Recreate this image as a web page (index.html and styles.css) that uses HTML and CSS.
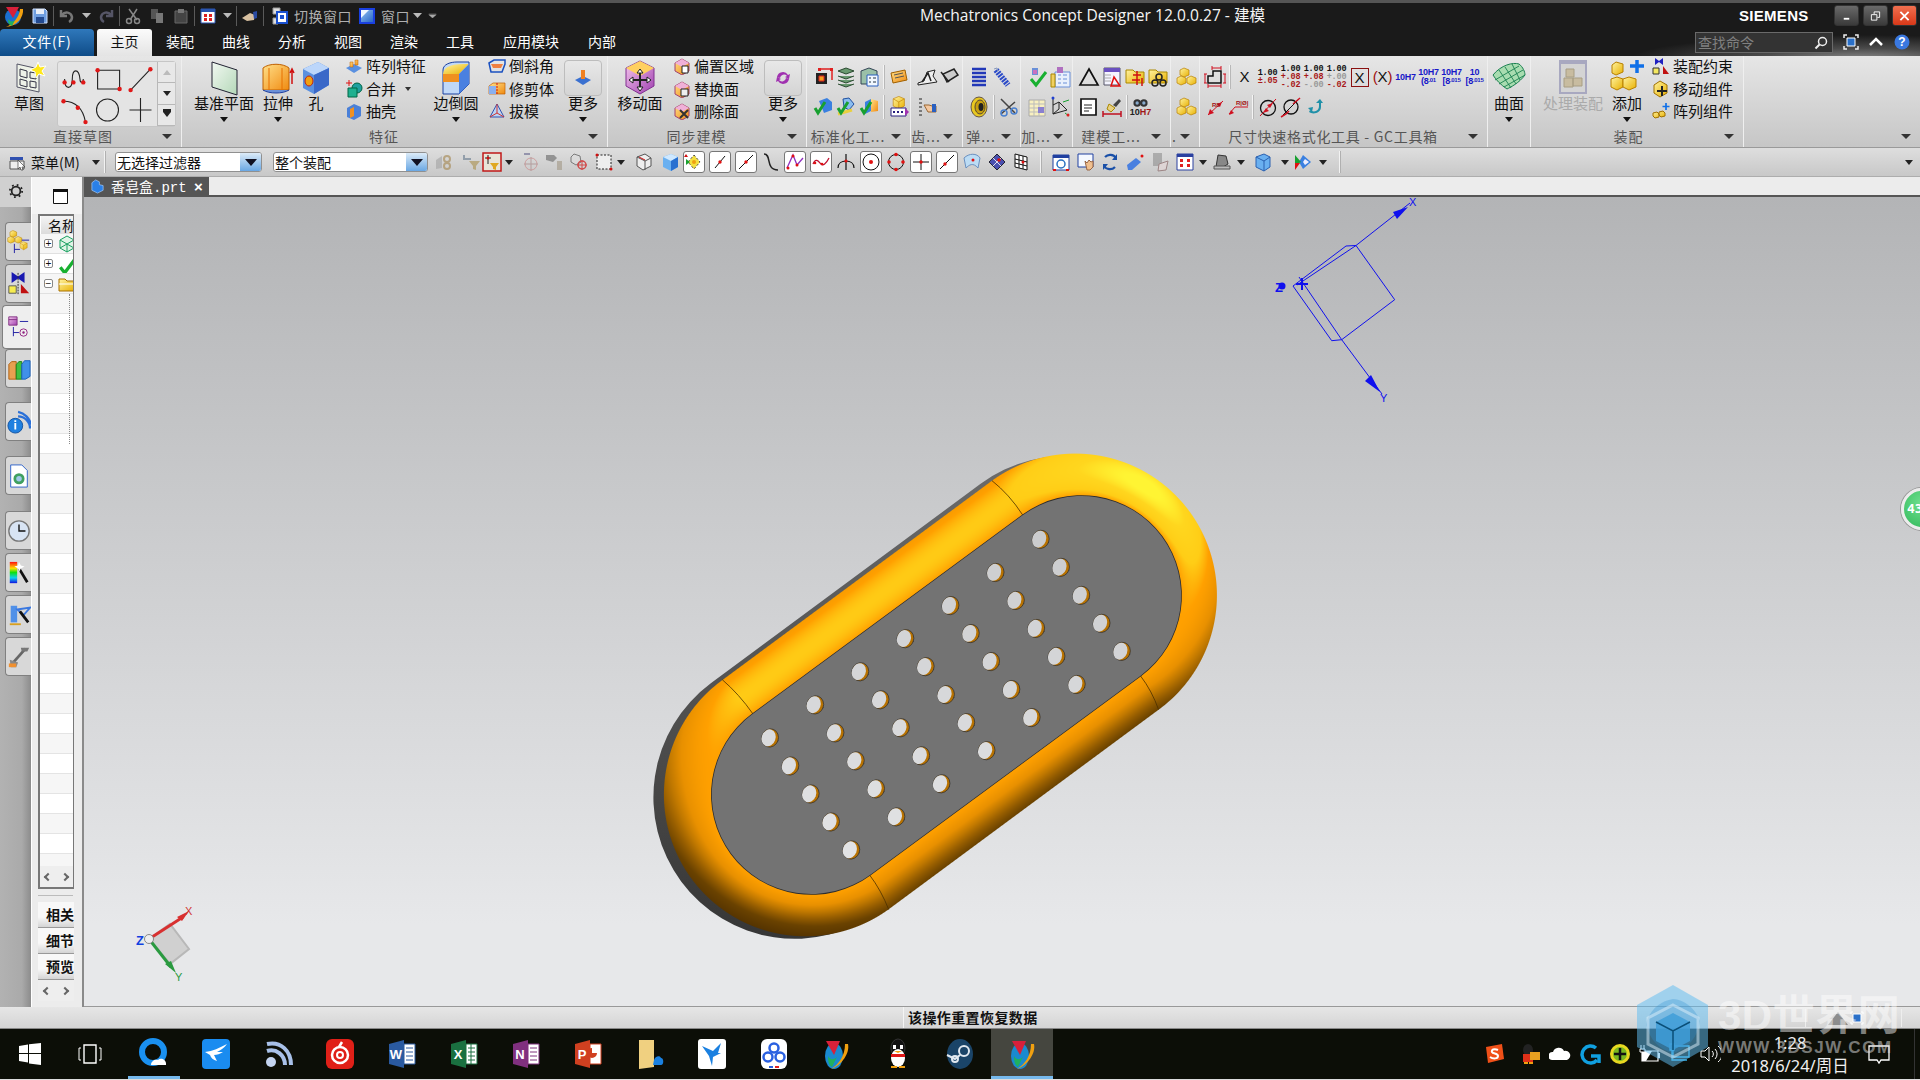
FILE: index.html
```html
<!DOCTYPE html>
<html lang="zh">
<head>
<meta charset="utf-8">
<title>Mechatronics Concept Designer</title>
<link rel="stylesheet" href="styles.css">
</head>
<body>
<svg class="defs" aria-hidden="true"><defs>
<linearGradient id="gb" x1="0" y1="0" x2="1" y2="1"><stop offset="0" stop-color="#9cc8f5"/><stop offset="1" stop-color="#1f5fc4"/></linearGradient>
<linearGradient id="go" x1="0" y1="0" x2="1" y2="1"><stop offset="0" stop-color="#ffe08a"/><stop offset="1" stop-color="#f08a10"/></linearGradient>
<linearGradient id="gy" x1="0" y1="0" x2="1" y2="1"><stop offset="0" stop-color="#fff3a0"/><stop offset="1" stop-color="#e8b000"/></linearGradient>
<linearGradient id="gg" x1="0" y1="0" x2="1" y2="1"><stop offset="0" stop-color="#f2f8f2"/><stop offset="1" stop-color="#b4d8b8"/></linearGradient>
<linearGradient id="gp" x1="0" y1="0" x2="1" y2="1"><stop offset="0" stop-color="#f6c8ee"/><stop offset="1" stop-color="#a040b0"/></linearGradient>
<linearGradient id="rb" x1="0" y1="0" x2="0" y2="1"><stop offset="0" stop-color="#ff1010"/><stop offset=".3" stop-color="#ffe000"/><stop offset=".5" stop-color="#10e010"/><stop offset=".75" stop-color="#10d0f0"/><stop offset="1" stop-color="#1010e0"/></linearGradient>
<g id="cube"><path d="M11 3l7 3v9l-7 4-7-4V6z" fill="url(#gy)" stroke="#c08000" stroke-width=".8"/><path d="M4 6l7 4 7-4M11 10v9" fill="none" stroke="#c08000" stroke-width=".8"/></g>
<g id="cubes"><path d="M8 2l5 2v5l-5 2-4-2V4z" fill="url(#gy)" stroke="#b88000" stroke-width=".7"/><path d="M5 10l5 2v5l-5 2-4-2v-5z" fill="url(#gy)" stroke="#b88000" stroke-width=".7"/><path d="M15 10l5 2v5l-5 2-4-2v-5z" fill="url(#gy)" stroke="#b88000" stroke-width=".7"/></g>
<g id="check"><path d="M3 13l4 5 9-12" fill="none" stroke="#18b030" stroke-width="3"/></g>
<g id="arrowdn"><path d="M0 0h9L4.500 5z"/></g>
</defs></svg>

<header class="top">
  <div class="qat">
    <div class="qat-l">
      <svg class="q nx" viewBox="0 0 26 26"><circle cx="13" cy="14" r="8" fill="#1a6fd0"/><path d="M6 4l13 0-6 11z" fill="#d8203a"/><path d="M23 6c1 8-6 17-17 18 7-3 13-9 14-18z" fill="#f0a010"/><path d="M8 16c2 3 5 3 7 1l-3 6c-3-1-4-3-4-7z" fill="#20b060"/></svg>
      <svg class="q" viewBox="0 0 18 18"><path d="M2 2h12l2 2v12H2z" fill="#6f9ee0" stroke="#cfe0ff"/><path d="M5 2h8v5H5z" fill="#e8eef8"/><path d="M5 10h8v6H5z" fill="#234a90"/></svg>
      <i class="qsep"></i>
      <svg class="q" viewBox="0 0 18 18"><path d="M3 3v6h6M4 8c3-4 9-3 10 2 0 2-1 4-3 5" fill="none" stroke="#777" stroke-width="2.500"/></svg>
      <svg class="qa" viewBox="0 0 9 5"><use href="#arrowdn"/></svg>
      <svg class="q" viewBox="0 0 18 18"><path d="M15 3v6H9M14 8c-3-4-9-3-10 2 0 2 1 4 3 5" fill="none" stroke="#556" stroke-width="2.500"/></svg>
      <i class="qsep"></i>
      <svg class="q" viewBox="0 0 18 18"><path d="M13 2L6 13M5 2l8 11" stroke="#888" stroke-width="1.500"/><circle cx="5" cy="14" r="2.500" fill="none" stroke="#888" stroke-width="1.500"/><circle cx="13" cy="14" r="2.500" fill="none" stroke="#888" stroke-width="1.500"/></svg>
      <svg class="q" viewBox="0 0 18 18"><path d="M3 2h7v10H3z" fill="#555"/><path d="M8 6h7v10H8z" fill="#777"/></svg>
      <svg class="q" viewBox="0 0 18 18"><path d="M3 4h12v12H3z" fill="#444" stroke="#666"/><path d="M6 2h6v4H6z" fill="#777"/></svg>
      <i class="qsep"></i>
      <svg class="q" viewBox="0 0 18 18"><path d="M2 2h14v14H2z" fill="#fff" stroke="#2a55b0"/><path d="M2 2h14v3H2z" fill="#2a55b0"/><path d="M5 7h3v3H5zM10 7h3v3h-3zM5 11h3v3H5zM10 11h3v3h-3z" fill="#e02020"/></svg>
      <svg class="qa" viewBox="0 0 9 5"><use href="#arrowdn"/></svg>
      <i class="qsep"></i>
      <svg class="q" viewBox="0 0 18 18"><path d="M1 11l8-5 5 2-1 5-7 1z" fill="#d8c0a0"/><path d="M12 5l4-1v7l-3 1z" fill="#2a4aa0"/></svg>
      <i class="qsep"></i>
      <svg class="q sw" viewBox="0 0 18 18"><path d="M2 1h7v6H2zM2 11h5v6H2z" fill="#ddd" stroke="#999"/><path d="M6 5h10v11H6z" fill="#fff" stroke="#1a50d0" stroke-width="2"/><path d="M9 8h4v4H9z" fill="#1a50d0"/></svg>
      <span class="qlabel">切换窗口</span>
      <svg class="q qw" viewBox="0 0 18 18"><path d="M2 2h14v14H2z" fill="url(#gb)" stroke="#1a40e0" stroke-width="2"/><path d="M3 3h8l-8 8z" fill="#eef6ff"/></svg>
      <span class="qlabel">窗口</span>
      <svg class="qa" viewBox="0 0 9 5"><use href="#arrowdn"/></svg>
      <svg class="qa" viewBox="0 0 9 6"><path d="M0 0h9M0 2h9L4.500 6z" fill="#aaa" stroke="#aaa" stroke-width=".5"/></svg>
    </div>
    <div class="title">Mechatronics Concept Designer 12.0.0.27 - 建模</div>
    <div class="siemens">SIEMENS</div>
    <div class="win"><button class="wb">
      <svg viewBox="0 0 12 12"><path d="M3 8h6v2H3z" fill="#fff"/></svg></button><button class="wb">
      <svg viewBox="0 0 12 12"><path d="M1.500 4.500h6v6h-6zM4.500 4V1.500h6v6H8" fill="none" stroke="#fff"/></svg></button><button class="wb close">
      <svg viewBox="0 0 12 12"><path d="M1.500 1.500l9 9M10.500 1.500l-9 9" stroke="#fff" stroke-width="2"/></svg></button></div>
  </div>
  <nav class="tabs">
    <div class="tab file">文件(F)</div>
    <div class="tab on">主页</div>
    <div class="tab">装配</div><div class="tab">曲线</div><div class="tab">分析</div><div class="tab">视图</div>
    <div class="tab">渲染</div><div class="tab">工具</div><div class="tab wide">应用模块</div><div class="tab">内部</div>
    <div class="search"><span>查找命令</span><svg viewBox="0 0 14 14"><circle cx="8.500" cy="5.500" r="4" fill="none" stroke="#eee" stroke-width="1.500"/><path d="M5.500 8.500L1.500 12.500" stroke="#eee" stroke-width="2"/></svg></div>
    <div class="helpers">
      <svg viewBox="0 0 16 16"><path d="M1 4V1h3M12 1h3v3M15 12v3h-3M4 15H1v-3" fill="none" stroke="#eee" stroke-width="1.500"/><path d="M4 4h8v8H4z" fill="#2a70c8" stroke="#fff"/></svg>
      <svg viewBox="0 0 16 16"><path d="M2 11l6-6 6 6" fill="none" stroke="#fff" stroke-width="2.500"/></svg>
      <svg viewBox="0 0 16 16"><circle cx="8" cy="8" r="7.500" fill="#3a78e0"/><text x="8" y="12" class="qm">?</text></svg>
    </div>
  </nav>
</header>

<section class="ribbon">
  <div class="grp w182">
    <div class="body">
      <div class="big ml15 w28"><svg class="bi" viewBox="0 0 36 36"><path d="M6 4l22 5v23L6 27z" fill="#eef2e8" stroke="#556" /><path d="M9 9l7 2v7l-7-2zM19 12l6 1v6l-6-1zM9 19l7 2v6l-7-2zM19 21l6 1v6l-6-1z" fill="none" stroke="#334" /><path d="M27 2l2 5 6-1-4 5 3 5-6-2-3 4-1-6-5-2 6-3z" fill="#ffe81a" stroke="#fff"/></svg><span class="lb">草图</span></div>
      <div class="gallery">
        <div class="gal-g">
          <svg viewBox="0 0 30 28"><path d="M6 15c0 10 7 10 7 0 0-10 6-10 7 0 0 4 3 4 3 0" fill="none" stroke="#222"/><circle cx="6" cy="18" r="2" fill="#e01818"/><circle cx="14" cy="18" r="2" fill="#e01818"/><circle cx="23" cy="18" r="2" fill="#e01818"/></svg>
          <svg viewBox="0 0 30 28"><path d="M6 7h20v17H6z" fill="none" stroke="#222"/><circle cx="6" cy="7" r="2" fill="#e01818"/><circle cx="26" cy="24" r="2" fill="#e01818"/></svg>
          <svg viewBox="0 0 30 28"><path d="M6 25L24 6" stroke="#222"/><circle cx="6" cy="25" r="2" fill="#e01818"/><circle cx="24" cy="6" r="2" fill="#e01818"/></svg>
          <svg viewBox="0 0 30 28"><path d="M5 6c12 0 18 8 20 19" fill="none" stroke="#222"/><circle cx="5" cy="6" r="2" fill="#e01818"/><circle cx="18" cy="12" r="2" fill="#e01818"/><circle cx="25" cy="25" r="2" fill="#e01818"/></svg>
          <svg viewBox="0 0 30 28"><circle cx="15" cy="14" r="10" fill="none" stroke="#222"/></svg>
          <svg viewBox="0 0 30 28"><path d="M15 3v22M5 14h20" stroke="#222"/></svg>
        </div>
        <div class="gal-s"><span class="up"></span><span class="dn"></span><span class="dn2"></span></div>
      </div>
    </div>
    <div class="foot"><span class="fl pl6">直接草图</span><i class="fa"></i></div>
  </div>

  <div class="grp w426">
    <div class="body">
      <div class="big ml13 w58"><svg class="bi" viewBox="0 0 36 36"><path d="M6 2l25 8v25L6 27z" fill="url(#gg)" stroke="#223"/></svg><span class="lb">基准平面</span><i class="ba"></i></div>
      <div class="big ml11 w28"><svg class="bi" viewBox="0 0 36 36"><path d="M3 8c6-5 20-5 26 0v22H3z" fill="url(#go)" stroke="#c06000"/><path d="M3 30c6 4 20 4 26 0" fill="#6a90d8" stroke="#2040a0"/><path d="M9 8v22M22 8v22" stroke="#e87000"/><path d="M32 24V10M30 13l2-4 2 4" fill="none" stroke="#d01010" stroke-width="1.500"/></svg><span class="lb">拉伸</span><i class="ba"></i></div>
      <div class="big ml10 w28"><svg class="bi" viewBox="0 0 36 36"><path d="M5 9l15-7 11 6v17L16 34 5 28z" fill="#5a90e0"/><path d="M5 9l15-7 11 6-15 7z" fill="#bcd6fa"/><path d="M16 15l15-7v17L16 34z" fill="#3a68c8"/><ellipse cx="11" cy="21" rx="4" ry="5" fill="#f0a010" stroke="#c02010"/></svg><span class="lb">孔</span></div>
      <div class="list ml15 lw80">
        <div class="li"><svg viewBox="0 0 18 18"><path d="M1 11l8-4 8 4-8 5z" fill="#5a90e0"/><path d="M5 5h3v5H5zM10 3h3v5h-3z" fill="url(#go)" stroke="#c06000" stroke-width=".5"/></svg>阵列特征</div>
        <div class="li"><svg viewBox="0 0 18 18"><circle cx="12" cy="8" r="5" fill="#20a0a0" stroke="#064"/><path d="M3 8h9v9H3z" fill="#20b090" stroke="#064"/><path d="M1 3h6M4 0v6" stroke="#e01010"/></svg>合并<i class="mini"></i></div>
        <div class="li"><svg viewBox="0 0 18 18"><path d="M2 6l7-4 7 3v9l-7 4-7-3z" fill="#4a80d8"/><path d="M5 7l4-2v9l-4 2z" fill="#f09020"/></svg>抽壳</div>
      </div>
      <div class="big ml9 w44"><svg class="bi" viewBox="0 0 36 36"><path d="M5 10c0-6 8-8 14-8h12v22l-10 10H5z" fill="#c0d8f8" stroke="#1a40a0"/><path d="M5 14C6 5 15 4 31 4L21 14z" fill="url(#gy)"/><path d="M5 14h16v8H5z" fill="#f09020"/><path d="M21 14l10-10v20l-10 10z" fill="#4a80e0"/></svg><span class="lb">边倒圆</span><i class="ba"></i></div>
      <div class="list ml10 lw65">
        <div class="li"><svg viewBox="0 0 18 18"><path d="M1 6l5-3h11v4l-3 8H3z" fill="none" stroke="#1a50c0" stroke-width="1.500"/><path d="M3 7l12 0-2 4H5z" fill="#f08040"/></svg>倒斜角</div>
        <div class="li"><svg viewBox="0 0 18 18"><path d="M1 6l4-3h12v11H1z" fill="url(#go)" stroke="#c06000" stroke-width=".7"/><path d="M1 6h7v8H1z" fill="#8ab0f0"/><path d="M9 3v12" stroke="#d01010" stroke-dasharray="2 1"/></svg>修剪体</div>
        <div class="li"><svg viewBox="0 0 18 18"><path d="M9 2l7 13H2z" fill="#bcd4f4" stroke="#3050b0"/><path d="M2 15l7-4 7 4M9 2v9" fill="none" stroke="#d03030"/></svg>拔模</div>
      </div>
      <div class="big ml11 w38"><div class="more"><svg viewBox="0 0 22 22"><path d="M3 13l8-4 8 4-8 5z" fill="#3a70d0"/><path d="M9 3h4v9H9z" fill="#f08020"/></svg></div><span class="lb">更多</span><i class="ba"></i></div>
    </div>
    <div class="foot"><span class="fl">特征</span><i class="fa"></i></div>
  </div>

  <div class="grp w199">
    <div class="body">
      <div class="big ml10 w44"><svg class="bi" viewBox="0 0 36 36"><path d="M18 1l14 7v18l-14 8-14-8V8z" fill="url(#gp)" stroke="#803090"/><path d="M4 8l14 8 14-8-14-7z" fill="#ffd060"/><path d="M18 11v18M9 20h18" stroke="#222" stroke-width="2"/><path d="M18 9l-3 4h6zM18 31l-3-4h6zM7 20l4-3v6zM29 20l-4-3v6z" fill="#fff" stroke="#222"/></svg><span class="lb">移动面</span></div>
      <div class="list ml11 lw79">
        <div class="li"><svg viewBox="0 0 18 18"><path d="M2 6l7-4 7 4v8l-7 4-7-4z" fill="url(#go)" stroke="#a04070"/><path d="M2 6l7-4 7 4-7 4z" fill="#f0b0d8"/><path d="M9 9h6v7H9z" fill="#fff" stroke="#222"/></svg>偏置区域</div>
        <div class="li"><svg viewBox="0 0 18 18"><path d="M2 6l7-4 7 4v8l-7 4-7-4z" fill="url(#go)" stroke="#a04070"/><path d="M2 6l7-4 7 4-7 4z" fill="#f0b0d8"/><path d="M8 9h7v7H8z" fill="#eee" stroke="#222"/></svg>替换面</div>
        <div class="li"><svg viewBox="0 0 18 18"><path d="M2 6l7-4 7 4v8l-7 4-7-4z" fill="url(#go)" stroke="#a04070"/><path d="M2 6l7-4 7 4-7 4z" fill="#f0b0d8"/><path d="M7 8l8 8M15 8l-8 8" stroke="#333" stroke-width="2"/></svg>删除面</div>
      </div>
      <div class="big ml12 w38"><div class="more"><svg viewBox="0 0 22 22"><path d="M5 10a6 6 0 0 1 11-2l2-1-1 5-4-2 2-1a4 4 0 0 0-7 2zM17 12a6 6 0 0 1-11 2l-2 1 1-5 4 2-2 1a4 4 0 0 0 7-2z" fill="#a030b0"/></svg></div><span class="lb">更多</span><i class="ba"></i></div>
    </div>
    <div class="foot"><span class="fl">同步建模</span><i class="fa"></i></div>
  </div>

  <div class="grp w104">
    <div class="rows">
      <div class="row">
        <span class="sl"><svg viewBox="0 0 22 22"><path d="M4 7h11v11H4z" fill="#222"/><path d="M7 10h5v5H7z" fill="#f0a020" stroke="#e02020"/><path d="M7 3h13v11" fill="none" stroke="#e02020" stroke-width="1.500"/><path d="M6 2h3v3H6zM18 2h3v3h-3z" fill="#e02020"/></svg></span>
        <span class="sl"><svg viewBox="0 0 22 22"><path d="M3 5l8-3 8 3-8 3zM3 10l8 3 8-3M3 14l8 3 8-3M3 18l8 3 8-3" fill="#6a9a70" stroke="#2a4a30"/></svg></span>
        <span class="sl"><svg viewBox="0 0 22 22"><path d="M3 5l8-3 8 3v13H3z" fill="#9ac0a8" stroke="#345"/><path d="M9 9h11v11H9z" fill="#f2f8ff" stroke="#2a60c0"/><path d="M11 12h2M15 12h3M11 16h2M15 16h3" stroke="#234"/></svg></span>
        <i class="vsep"></i>
        <span class="sl"><svg viewBox="0 0 22 22"><path d="M3 7l14-3 2 10L5 17z" fill="url(#go)" stroke="#a06000"/><path d="M6 9l9-2M7 12l9-2" stroke="#555"/></svg></span>
      </div>
      <div class="row">
        <span class="sl"><svg viewBox="0 0 22 22"><path d="M7 5l8-3 5 4v8l-8 3z" fill="#3a80e0"/><path d="M3 12l3 5 7-11" fill="none" stroke="#18a030" stroke-width="3"/></svg></span>
        <span class="sl"><svg viewBox="0 0 22 22"><path d="M8 3l6-1 5 6-5 6-5-3z" fill="#8abcf0" stroke="#2050a0"/><path d="M3 18l14-4" stroke="#e8d040" stroke-width="3"/><path d="M3 12l3 5 7-11" fill="none" stroke="#18a030" stroke-width="3"/></svg></span>
        <span class="sl"><svg viewBox="0 0 22 22"><path d="M7 6l6-3v12l-6 3z" fill="#3a80e0"/><path d="M13 3l7 2v10l-7 1z" fill="url(#go)"/><path d="M3 12l3 5 7-11" fill="none" stroke="#18a030" stroke-width="3"/></svg></span>
        <i class="vsep"></i>
        <span class="sl"><svg viewBox="0 0 22 22"><use href="#cube" transform="translate(2,-2) scale(.8)"/><path d="M3 12h15v8H3z" fill="#fff" stroke="#2a2080"/><path d="M5 16h2M9 16h2M13 16h2" stroke="#2a2080" stroke-width="2"/><path d="M17 12l4 4-4 4z" fill="#a030b0"/></svg></span>
      </div>
    </div>
    <div class="foot"><span class="fl">标准化工...</span><i class="fa"></i></div>
  </div>

  <div class="grp w52">
    <div class="rows">
      <div class="row">
        <span class="sl"><svg viewBox="0 0 22 22"><path d="M2 17l6-2 3-9 8-2-2 6 4 6-19 3z" fill="#eee" stroke="#222"/><path d="M6 16l6-9 3 8" fill="none" stroke="#222" stroke-width="1.500"/></svg></span>
        <span class="sl"><svg viewBox="0 0 22 22"><path d="M4 8l4 8 11-7-4-6z" fill="#ccc" stroke="#222" stroke-width="1.500"/><path d="M2 6l8 10" stroke="#222" stroke-width="1.500"/></svg></span>
      </div>
      <div class="row">
        <span class="sl"><svg viewBox="0 0 22 22"><path d="M3 3h3M3 7h3M3 11h3M3 15h3M3 19h3" stroke="#222"/><path d="M8 9h5l3 1h4v6h-8z" fill="#f4c8a0" stroke="#963"/><path d="M16 8h4v8h-4z" fill="#2a60c0"/></svg></span>
      </div>
    </div>
    <div class="foot"><span class="fl">齿...</span><i class="fa"></i></div>
  </div>

  <div class="grp w58">
    <div class="rows">
      <div class="row">
        <span class="sl"><svg viewBox="0 0 22 22"><path d="M4 3h14M4 7h14M4 11h14M4 15h14M4 19h14" stroke="#2238b8" stroke-width="2.500"/></svg></span>
        <span class="sl"><svg viewBox="0 0 22 22"><path d="M5 4l12 15" stroke="#2a4ac8" stroke-width="6" stroke-dasharray="2 1"/><path d="M3 3l3-1 1 3" fill="none" stroke="#89b"/></svg></span>
      </div>
      <div class="row">
        <span class="sl"><svg viewBox="0 0 22 22"><ellipse cx="11" cy="11" rx="8" ry="10" fill="#e8c820" stroke="#654"/><ellipse cx="12" cy="11" rx="5" ry="7" fill="#c8a010" stroke="#543"/><ellipse cx="13" cy="11" rx="2.500" ry="4" fill="#222"/></svg></span>
        <i class="vsep nm"></i>
        <span class="sl"><svg viewBox="0 0 22 22"><path d="M4 3l14 14M18 6L4 18" stroke="#444" stroke-width="1.500"/><circle cx="7" cy="17" r="3" fill="none" stroke="#4a80d0" stroke-width="1.500"/><circle cx="17" cy="15" r="3" fill="none" stroke="#4a80d0" stroke-width="1.500"/></svg></span>
      </div>
    </div>
    <div class="foot"><span class="fl">弹...</span><i class="fa"></i></div>
  </div>

  <div class="grp w52">
    <div class="rows">
      <div class="row">
        <span class="sl"><svg viewBox="0 0 22 22"><path d="M6 2h6v7H6z" fill="#6a90d8"/><path d="M7 4h4v4H7z" fill="#c870c0"/><path d="M5 13l5 6 10-13" fill="none" stroke="#18b030" stroke-width="3"/></svg></span>
        <span class="sl"><svg viewBox="0 0 22 22"><path d="M6 6h15v15H6z" fill="#e8f0fc" stroke="#6a90d8"/><path d="M9 9h3M14 9h4M9 13h3M14 13h4M9 17h3M14 17h4" stroke="#6a90d8"/><path d="M8 1h6v6H8z" fill="#b070c0"/><path d="M2 8h4v13H2z" fill="#f0d060" stroke="#a80"/></svg></span>
      </div>
      <div class="row">
        <span class="sl"><svg viewBox="0 0 22 22"><path d="M3 4h16v16H3z" fill="#f8f0c0" stroke="#aaa"/><path d="M3 8h16M3 12h16M3 16h16M8 4v16M13 4v16" stroke="#bbb"/><path d="M12 11h6v6h-6z" fill="#8a80d0"/></svg></span>
        <span class="sl"><svg viewBox="0 0 22 22"><path d="M4 2v16l14-4M4 9l6-3 8 8M4 18l6-5V6" fill="none" stroke="#222"/><path d="M14 6l6-2M16 17l4 3" stroke="#18a030"/><circle cx="19" cy="19" r="1.500" fill="#e02020"/><circle cx="4" cy="2" r="1.500" fill="#2040d0"/></svg></span>
      </div>
    </div>
    <div class="foot"><span class="fl">加...</span><i class="fa"></i></div>
  </div>

  <div class="grp w98">
    <div class="rows">
      <div class="row">
        <span class="sl"><svg viewBox="0 0 22 22"><path d="M11 3l9 16H2z" fill="none" stroke="#111" stroke-width="1.700"/></svg></span>
        <span class="sl"><svg viewBox="0 0 22 22"><path d="M3 2h16v17H3z" fill="#f4f4ff" stroke="#556"/><path d="M3 2h16v4H3z" fill="#6a50c0"/><path d="M4 9h6M4 12h6M4 15h6" stroke="#aaa"/><path d="M13 11l6 9h-9z" fill="none" stroke="#e01010" stroke-width="1.500"/></svg></span>
        <span class="sl"><svg viewBox="0 0 22 22"><path d="M2 4h7l2 2h9v11H2z" fill="url(#gy)" stroke="#a80"/><path d="M13 5v9M9 9h8M8 14h8M13 11v8M18 12v8" stroke="#d01010" stroke-width="1.500"/></svg></span>
        <span class="sl"><svg viewBox="0 0 22 22"><path d="M2 4h7l2 2h9v11H2z" fill="url(#gy)" stroke="#a80"/><circle cx="12" cy="11" r="3" fill="none" stroke="#222" stroke-width="1.500"/><circle cx="8" cy="17" r="3" fill="none" stroke="#222" stroke-width="1.500"/><circle cx="16" cy="17" r="3" fill="none" stroke="#222" stroke-width="1.500"/></svg></span>
      </div>
      <div class="row">
        <span class="sl"><svg viewBox="0 0 22 22"><path d="M3 3h15v16H3z" fill="#fff" stroke="#111" stroke-width="1.700"/><path d="M6 9h8M6 12h8M6 15h5" stroke="#222"/></svg></span>
        <span class="sl"><svg viewBox="0 0 22 22"><path d="M12 9l6-6 2 2-5 6z" fill="#444"/><path d="M8 8l6 4-4 4-4-3z" fill="#e8d080" stroke="#a80"/><path d="M2 15v6M20 15v6M2 18h18" stroke="#c01020" stroke-width="1.500"/></svg></span>
        <i class="vsep nm"></i>
        <span class="sl dbl"><svg viewBox="0 0 22 12"><circle cx="7" cy="6" r="4.500" fill="#333"/><circle cx="15" cy="6" r="4.500" fill="#333"/><circle cx="7" cy="6" r="2" fill="#8ac"/><circle cx="15" cy="6" r="2" fill="#8ac"/></svg><b>10<em>H7</em></b></span>
      </div>
    </div>
    <div class="foot"><span class="fl">建模工...</span><i class="fa"></i></div>
  </div>

  <div class="grp w29">
    <div class="rows">
      <div class="row"><span class="sl"><svg viewBox="0 0 22 22"><use href="#cubes"/></svg></span></div>
      <div class="row"><span class="sl"><svg viewBox="0 0 22 22"><use href="#cubes"/></svg></span></div>
    </div>
    <div class="foot"><span class="fl">.</span><i class="fa"></i></div>
  </div>

  <div class="grp w288">
    <div class="rows pl3">
      <div class="row">
        <span class="sl"><svg viewBox="0 0 22 22"><path d="M4 17V10h5V5h8v12z" fill="none" stroke="#111" stroke-width="1.500"/><path d="M1 8v9M0 8h3M0 17h3M21 8v9M19 8h4M19 17h4M8 2h9M8 0v4M17 0v4M4 20h13M4 18v4M17 18v4" stroke="#d01020"/></svg></span>
        <i class="vsep"></i>
        <span class="sl dt"><b class="x">X</b></span>
        <span class="sl dt"><b>1.00</b><b class="red">±.05</b></span>
        <span class="sl dt"><b>1.00</b><b class="red">+.08</b><b class="red">-.02</b></span>
        <span class="sl dt"><b>1.00</b><b class="red">+.08</b><b class="gry">-.00</b></span>
        <span class="sl dt"><b>1.00</b><b class="gry">+.00</b><b class="red">-.02</b></span>
        <span class="sl dt"><b class="xbox">X</b></span>
        <span class="sl dt"><b class="xpar"><em>(</em>X<em>)</em></b></span>
        <span class="sl dt blu"><b>10H7</b></span>
        <span class="sl dt blu"><b>10H7</b><b class="lim">(8<sup>.01</sup></b></span>
        <span class="sl dt blu"><b>10H7</b><b class="lim">[8<sup>.015</sup></b></span>
        <span class="sl dt blu"><b>10</b><b class="lim">[8<sup>.015</sup></b></span>
      </div>
      <div class="row">
        <span class="sl"><svg viewBox="0 0 22 22"><path d="M4 19L19 5" stroke="#d01020"/><path d="M4 19l2-6 4 4zM18 6l-2 5-3-3z" fill="#d01020"/><text x="8" y="11" class="tiny">R8</text></svg></span>
        <span class="sl"><svg viewBox="0 0 22 22"><path d="M2 18l6-7h13" fill="none" stroke="#d01020"/><path d="M2 19l2-5 3 3z" fill="#d01020"/><text x="9" y="9" class="tiny">R|Ø|</text></svg></span>
        <i class="vsep"></i>
        <span class="sl"><svg viewBox="0 0 22 22"><circle cx="11" cy="12" r="7.500" fill="none" stroke="#111" stroke-width="1.300"/><path d="M3 20L19 3" stroke="#d01020"/><path d="M6 17l3-5 3 3zM16 7l-3 5-3-3z" fill="#d01020"/></svg></span>
        <span class="sl"><svg viewBox="0 0 22 22"><circle cx="11" cy="11" r="7" fill="none" stroke="#111" stroke-width="1.300"/><path d="M3 19L19 3" stroke="#111" /><path d="M1 21l5-3 3-3" stroke="#d01020" stroke-width="1.500"/><path d="M13 8l7-6" stroke="#d01020" stroke-width="1.500"/></svg></span>
        <span class="sl"><svg viewBox="0 0 22 22"><path d="M7 14c4 3 9 1 9-4V7h-3l4-4 3 4h-2v4c0 6-8 8-12 5z" fill="#2090a8"/><path d="M5 12l5-1-1 5z" fill="#2090a8"/></svg></span>
      </div>
    </div>
    <div class="foot"><span class="fl lng">尺寸快速格式化工具 - GC工具箱</span><i class="fa"></i></div>
  </div>

  <div class="grp w43">
    <div class="body">
      <div class="big w42"><svg class="bi" viewBox="0 0 36 36"><path d="M2 15C10 5 22 2 28 4c4 3 6 8 6 11-6 8-14 12-18 14C10 25 5 20 2 15z" fill="#a8dcb0" stroke="#1a8050"/><path d="M8 10l12 18M14 7l11 17M21 4l8 16M4 20L28 6M8 24L32 10M13 27L34 15" stroke="#1a8050" stroke-width=".9"/></svg><span class="lb">曲面</span><i class="ba"></i></div>
    </div>
    <div class="foot"></div>
  </div>

  <div class="grp w213">
    <div class="body">
      <div class="big ml12 w60 off"><div class="hd"><svg viewBox="0 0 28 34"><path d="M0 0h28v34H0z" fill="#a8a8c0"/><path d="M2 4h24v28H2z" fill="#d4d4d4"/><path d="M7 9h8v8H7zM14 18h9v8h-9zM5 18h9v9H5z" fill="#c8bca0" stroke="#a89e84"/></svg></div><span class="lb">处理装配</span></div>
      <div class="big ml6 w36"><svg class="bi wd" viewBox="0 0 36 36"><path d="M7 2l7 2v8l-7 3-4-2V5z" fill="url(#gy)" stroke="#b88000"/><path d="M8 17l6 2v8l-6 3-6-3v-8z" fill="url(#gy)" stroke="#b88000"/><path d="M20 17l7 2v8l-7 3-6-3v-8z" fill="url(#gy)" stroke="#b88000"/><path d="M28 0v13M21 6h14" stroke="#1070e8" stroke-width="3.500"/></svg><span class="lb">添加</span><i class="ba"></i></div>
      <div class="list ml7 asm">
        <div class="li"><svg viewBox="0 0 18 18"><path d="M3 1l4 3 4-3v7l-4-3-4 3z" fill="#2020c0"/><path d="M1 11h6v6H1z" fill="#f4e860" stroke="#333"/><path d="M11 9l6 8h-6z" fill="#c01010"/></svg>装配约束</div>
        <div class="li"><svg viewBox="0 0 18 18"><path d="M8 1l7 4v8l-7 4-6-4V5z" fill="url(#gy)" stroke="#a07000"/><path d="M10 6v10M5 11h10" stroke="#222" stroke-width="2"/></svg>移动组件</div>
        <div class="li"><svg viewBox="0 0 18 18"><path d="M1 11l4-1 2 2v3l-4 1-2-2zM7 10l4-1 2 2v3l-4 1-2-2z" fill="url(#gy)" stroke="#a07000"/><path d="M14 1v7M10.500 4.500h7" stroke="#1070e8" stroke-width="1.700"/></svg>阵列组件</div>
      </div>
    </div>
    <div class="foot"><span class="fl pl4">装配</span><i class="fa"></i></div>
  </div>

  <div class="grp w176 last">
    <div class="body"></div>
    <div class="foot"><span class="fl"></span><i class="fa fr"></i></div>
  </div>
</section>

<section class="selbar">
  <svg class="mn" viewBox="0 0 20 18"><path d="M2 4h13v3H2z" fill="#3050b0"/><path d="M2 8h14v8H2z" fill="#eee" stroke="#555"/><path d="M10 7l7 7-3 0 1 3-2 0-1-3-2 2z" fill="#fff" stroke="#222" stroke-width=".6"/></svg>
  <span class="menu">菜单(M)</span><i class="sa"></i>
  <i class="ssep"></i>
  <div class="combo c1"><span>无选择过滤器</span><i></i></div>
  <div class="combo c2"><span>整个装配</span><i></i></div>
  <div class="tools">
    <span class="b w32 dim"><svg viewBox="0 0 20 20"><path d="M2 8l6-4v12l-6 1z" fill="#aaa"/><circle cx="13" cy="7" r="3" fill="none" stroke="#aa9060" stroke-width="2"/><circle cx="13" cy="14" r="3" fill="none" stroke="#aa9060" stroke-width="2"/></svg></span>
    <span class="b w22 dim"><svg viewBox="0 0 20 20"><path d="M3 3v4h7" fill="none" stroke="#789" stroke-width="2"/><path d="M8 9h11l-4 5v4l-3-1v-3z" fill="#b09a60"/></svg></span>
    <span class="b w20"><svg viewBox="0 0 20 20"><path d="M1 1h18v18H1z" fill="#e8e4d8" stroke="#c01818" stroke-width="1.500"/><path d="M6 3v9M3 6h6" stroke="#222"/><circle cx="6" cy="6" r="1.500" fill="#d01010"/><path d="M8 11h9l-3 4v3l-3-1v-2z" fill="#e0a820"/></svg></span>
    <i class="sa ws"></i>
    <span class="b w28 dim"><svg viewBox="0 0 20 20"><circle cx="11" cy="12" r="6" fill="none" stroke="#c88"/><path d="M11 5v14M4 12h14" stroke="#a88"/><path d="M4 2h6" stroke="#779" stroke-width="2"/></svg></span>
    <span class="b w20 dim"><svg viewBox="0 0 20 20"><path d="M2 3h8l3 3-4 4-7-2z" fill="#777"/><path d="M13 9h5v9h-5z" fill="#a9a090"/></svg></span>
    <span class="b w30 dim"><svg viewBox="0 0 20 20"><path d="M5 2l6 2 1 6-5 3-5-3V5z" fill="#ddd" stroke="#555"/><circle cx="13" cy="13" r="4" fill="none" stroke="#d01010" stroke-width="1.500"/><path d="M13 8v10M8 13h10" stroke="#d01010"/></svg></span>
    <span class="b w20"><svg viewBox="0 0 20 20"><path d="M3 3h14v14H3z" fill="#eee" stroke="#222" stroke-dasharray="2 1.500"/><circle cx="3" cy="3" r="1.500" fill="#d01010"/><circle cx="17" cy="17" r="1.500" fill="#d01010"/></svg></span>
    <i class="sa ws"></i>
    <span class="b w30"><svg viewBox="0 0 20 20"><path d="M4 5l8-3 6 4v8l-8 4-6-4z" fill="#eee" stroke="#555"/><path d="M4 5l8 4 6-3M12 9v9" fill="none" stroke="#555"/><path d="M6 5l6 3" stroke="#d01010"/></svg></span>
    <span class="b w23"><svg viewBox="0 0 20 20"><path d="M3 5l8-3 7 3v10l-7 4-8-4z" fill="#6ab0f0"/><path d="M3 5l8-3 7 3-7 4z" fill="#cfe8ff"/><path d="M11 9l7-4v10l-7 4z" fill="#2a70d0"/></svg></span>
    <span class="bx"><svg viewBox="0 0 20 20"><path d="M10 3l6 7-6 7-6-7z" fill="#f4e040" stroke="#444" stroke-dasharray="2 2"/><path d="M2 7l4 3-4 3z" fill="#18a030"/><path d="M2 2l2 3-4 0z" fill="#d01010"/><circle cx="10" cy="10" r="2" fill="#f0a010"/></svg></span>
    <span class="bx"><svg viewBox="0 0 20 20"><path d="M5 16L15 4" stroke="#111"/><circle cx="10" cy="10" r="1.700" fill="#e01010"/></svg></span>
    <span class="bx"><svg viewBox="0 0 20 20"><path d="M3 17L17 3" stroke="#111"/><circle cx="10" cy="10" r="1.700" fill="#e01010"/></svg></span>
    <span class="b w23"><svg viewBox="0 0 20 20"><path d="M3 2c8 0 1 16 14 16" fill="none" stroke="#222" stroke-width="1.500"/></svg></span>
    <span class="bx"><svg viewBox="0 0 20 20"><path d="M2 16l6-13 4 10 6-7" fill="none" stroke="#9030c0" stroke-width="1.300"/><circle cx="8" cy="4" r="1.500" fill="#e01010"/><circle cx="12" cy="13" r="1.500" fill="#e01010"/><circle cx="3" cy="16" r="1.500" fill="#e01010"/></svg></span>
    <span class="bx"><svg viewBox="0 0 20 20"><path d="M2 12c3-7 6-2 8 0s5 0 8-6" fill="none" stroke="#c01030" stroke-width="1.300"/><circle cx="4" cy="11" r="1.300" fill="#e01010"/><circle cx="11" cy="12" r="1.300" fill="#e01010"/></svg></span>
    <span class="b w24"><svg viewBox="0 0 20 20"><path d="M10 2v16M2 16c0-5 4-7 8-7s8 2 8 7" fill="none" stroke="#111" stroke-width="1.200"/><circle cx="10" cy="9" r="1.600" fill="#e01010"/></svg></span>
    <span class="bx"><svg viewBox="0 0 20 20"><circle cx="10" cy="10" r="8" fill="none" stroke="#111"/><circle cx="10" cy="10" r="2" fill="#e01010"/></svg></span>
    <span class="b w24"><svg viewBox="0 0 20 20"><circle cx="10" cy="10" r="7.500" fill="none" stroke="#111"/><circle cx="10" cy="2.500" r="1.800" fill="#e01010"/><circle cx="3" cy="10" r="1.800" fill="#e01010"/><circle cx="17" cy="10" r="1.800" fill="#e01010"/><circle cx="10" cy="17.500" r="1.800" fill="#e01010"/></svg></span>
    <span class="bx"><svg viewBox="0 0 20 20"><path d="M10 2v16M2 10h16" stroke="#111"/><circle cx="10" cy="10" r="1.700" fill="#e01010"/></svg></span>
    <span class="bx"><svg viewBox="0 0 20 20"><path d="M3 17L17 3" stroke="#111"/><circle cx="8" cy="12" r="1.700" fill="#e01010"/></svg></span>
    <span class="b w24"><svg viewBox="0 0 20 20"><path d="M2 6c5-5 13-5 16 0l-2 10C11 10 7 13 4 16z" fill="#bcdcf4" stroke="#6a90c0"/><circle cx="11" cy="8" r="1.500" fill="#e01010"/></svg></span>
    <span class="b w25"><svg viewBox="0 0 20 20"><path d="M10 2l8 8-8 8-8-8z" fill="#4a50b0" stroke="#223"/><path d="M6 6l8 8M10 2v0M14 6l-8 8" stroke="#dde"/><circle cx="12" cy="8" r="1.800" fill="#e01010"/></svg></span>
    <span class="b w24"><svg viewBox="0 0 20 20"><path d="M4 2l12 3v13L4 15z" fill="#fff" stroke="#111"/><path d="M4 7l12 3M4 11l12 3M8 3v13M12 4v13" stroke="#111"/><circle cx="12" cy="10" r="1.500" fill="#e01010"/></svg></span>
    <i class="ssep mg"></i>
    <span class="b w24"><svg viewBox="0 0 20 20"><path d="M2 3h16v15H2z" fill="#fff" stroke="#2040a0"/><path d="M2 3h16v3H2z" fill="#2040a0"/><circle cx="10" cy="12" r="4" fill="none" stroke="#2a70c0" stroke-width="1.500"/><path d="M2 18h3M15 18h3" stroke="#e01010" stroke-width="2"/></svg></span>
    <span class="b w25"><svg viewBox="0 0 20 20"><path d="M2 2h15v13H2z" fill="#f4f8ff" stroke="#2040a0"/><path d="M9 9l2 2 2-3 2 2 2-1v6l-3 3h-3z" fill="#f0c090" stroke="#964"/></svg></span>
    <span class="b w24"><svg viewBox="0 0 20 20"><path d="M16 6a7 7 0 0 0-11-1M4 14a7 7 0 0 0 11 1" fill="none" stroke="#1a50a8" stroke-width="2.200"/><path d="M17 2v6h-5zM3 18v-6h5z" fill="#1a50a8"/></svg></span>
    <span class="b w25"><svg viewBox="0 0 20 20"><path d="M2 13l9-7 5 4-9 8H3z" fill="#4a80e0"/><circle cx="17" cy="4" r="1.500" fill="#e01010"/></svg></span>
    <span class="b w26 dim"><svg viewBox="0 0 20 20"><path d="M3 1h9v13H3z" fill="#999"/><path d="M9 12l9-3-2 9-8 1z" fill="#e4d8d8" stroke="#866"/></svg></span>
    <span class="b w23"><svg viewBox="0 0 20 20"><path d="M2 2h16v16H2z" fill="#fff" stroke="#2a40a0"/><path d="M2 2h16v3H2z" fill="#2a40a0"/><path d="M5 7h3v3H5zM12 7h3v3h-3zM5 12h3v3H5zM12 12h3v3h-3z" fill="#e02020"/></svg></span>
    <i class="sa ws"></i>
    <span class="b w24"><svg viewBox="0 0 20 20"><path d="M6 3l8 1 2 8-5 3H4z" fill="#888" stroke="#333"/><path d="M2 14h16v3H2z" fill="#bbb" stroke="#555"/></svg></span>
    <i class="sa ws"></i>
    <span class="b w30"><svg viewBox="0 0 20 20"><path d="M3 5l8-3 6 3v10l-6 4-8-4z" fill="#6ab0f0" stroke="#2a60b0"/><path d="M3 5l8 4 6-4M11 9v10" fill="none" stroke="#2a60b0"/></svg></span>
    <i class="sa ws"></i>
    <span class="b w24"><svg viewBox="0 0 20 20"><path d="M9 3l8 7-8 7-4-7z" fill="#3a80e0"/><path d="M11 7l4 3-4 3-2-3z" fill="#eef"/><path d="M1 3l6 7-6 3z" fill="#18a030"/><path d="M1 11l5 0-5 7z" fill="#e01010"/></svg></span>
    <i class="sa ws"></i>
    <i class="ssep mg2"></i>
  </div>
  <i class="sa endarrow"></i>
</section>

<main class="main">
  <aside class="rbar">
    <div class="gear"><svg viewBox="0 0 16 16"><circle cx="8" cy="8" r="5" fill="none" stroke="#222" stroke-width="2"/><circle cx="8" cy="8" r="7" fill="none" stroke="#222" stroke-width="2" stroke-dasharray="2 3.500"/></svg></div>
    <div class="rt"><svg viewBox="0 0 26 28"><use href="#cubes" transform="translate(0,0) scale(.8)"/><path d="M8 16v10M8 22h6M16 12h8" stroke="#1818a0" /><use href="#cube" transform="translate(12,12) scale(.55)"/></svg></div>
    <div class="rt"><svg viewBox="0 0 26 28"><path d="M5 1l7 5 7-5v12l-7-5-7 5z" fill="#1818b0"/><path d="M2 16h8v8H2z" fill="#f6ec50" stroke="#555"/><path d="M15 14l9 10h-9z" fill="#c01010"/><path d="M12 2v24" stroke="#222" stroke-dasharray="2 1"/></svg></div>
    <div class="rt act"><svg viewBox="0 0 26 28"><path d="M3 3h9v9H3z" fill="url(#gp)" stroke="#803080"/><path d="M3 6h9" stroke="#803080"/><path d="M15 8h9M8 14v10M8 20h6" stroke="#1818a0"/><circle cx="19" cy="20" r="4" fill="none" stroke="#902080"/><circle cx="19" cy="20" r="1.300" fill="#902080"/></svg></div>
    <div class="rt"><svg viewBox="0 0 26 28"><path d="M2 9l3-3h5v19H2z" fill="#e8a050" stroke="#b06010"/><path d="M10 9l3-3h3v19h-6z" fill="#40c040" stroke="#188018"/><path d="M16 9l3-4h6v17l-5 3h-4z" fill="#4090e8" stroke="#1860b8"/></svg></div>
    <div class="rt g14"><svg viewBox="0 0 26 28"><path d="M12 8a13 13 0 0 1 13 13M12 3a18 18 0 0 1 14 14" fill="none" stroke="#2a70d8" stroke-width="2.500"/><circle cx="9" cy="18" r="8" fill="#2080e0" stroke="#1050a0"/><path d="M8 15h2v7H8zM8 12h2v2H8z" fill="#fff"/></svg></div>
    <div class="rt g15"><svg viewBox="0 0 26 28"><path d="M4 2h12l6 6v18H4z" fill="#fff" stroke="#2a60c8"/><circle cx="13" cy="17" r="6" fill="#40a060"/><circle cx="13" cy="17" r="3" fill="#a0c8e8"/></svg></div>
    <div class="rt g16"><svg viewBox="0 0 26 28"><circle cx="13" cy="14" r="11" fill="#d8e4f4" stroke="#777" stroke-width="1.500"/><path d="M13 7v7h7" fill="none" stroke="#111" stroke-width="1.500"/></svg></div>
    <div class="rt"><svg viewBox="0 0 26 28"><path d="M3 2h8v23H3z" fill="url(#rb)"/><path d="M13 9l9 15" stroke="#111" stroke-width="3"/><path d="M13 2l2 4 4 1-4 2-2 4-1-4-4-2 4-1z" fill="#fff"/></svg></div>
    <div class="rt"><svg viewBox="0 0 26 28"><path d="M4 4h7v18H4z" fill="#5090e8"/><path d="M11 8l14-2-7 8z" fill="none" stroke="#3a78e0" stroke-width="2"/><path d="M3 24h12" stroke="#d8a020" stroke-width="2"/><path d="M14 10l9 12" stroke="#111" stroke-width="3"/></svg></div>
    <div class="rt"><svg viewBox="0 0 26 28"><path d="M5 22L20 5" stroke="#666" stroke-width="3"/><path d="M15 4h9l-2 4h-6z" fill="#777"/><path d="M3 17l9 3-2 5H4z" fill="#888"/><path d="M2 21h8v4H2z" fill="#f09030"/></svg></div>
  </aside>

  <aside class="nav">
    <div class="nav-top"><svg viewBox="0 0 15 15"><path d="M.500.500h14v14H.500z" fill="#fff" stroke="#111"/><path d="M0 0h15v3H0z" fill="#111"/></svg></div>
    <div class="tree">
      <div class="tree-h">名称</div>
      <div class="tree-r"><i class="pm">+</i><svg viewBox="0 0 18 18"><path d="M9 1l7 4v8l-7 4-7-4V5z" fill="#dff4e6" stroke="#18a060"/><path d="M2 5l7 4 7-4M9 9v8M2 13l7-4 7 4" fill="none" stroke="#18a060"/></svg></div>
      <div class="tree-r"><i class="pm">+</i><svg viewBox="0 0 18 18"><use href="#check" transform="translate(-1,-2) scale(1.100)"/></svg></div>
      <div class="tree-r"><i class="pm">−</i><svg viewBox="0 0 18 18"><path d="M1 4h6l2 2h8v10H1z" fill="url(#gy)" stroke="#a87000"/><path d="M1 9h16" stroke="#fff"/></svg></div>
      <div class="tree-fill"></div>
      <div class="tree-nav"><i class="cl"></i><i class="cr"></i></div>
    </div>
    <div class="split"></div>
    <div class="acc">相关</div><div class="acc">细节</div><div class="acc">预览</div>
    <div class="acc-nav"><i class="cl"></i><i class="cr"></i></div>
  </aside>

  <div class="work">
    <div class="doc"><div class="doctab"><svg viewBox="0 0 16 16"><path d="M2 4l4-3 4 2v3l4 1v5l-6 3-6-3z" fill="#2a80e8" stroke="#a8d0ff" stroke-width=".7"/></svg><span>香皂盒.prt</span><b>×</b></div></div>
    <div class="view">
      <canvas id="model" class="model" width="600" height="520"></canvas>
      <svg class="wcs" viewBox="0 0 160 220">
        <g fill="none" stroke="#1010ee" stroke-width="1"><path d="M18 90L71 50l10-.5L119.700 103.700 66.700 143.700l-10 1L18 90M22 89L81 49.500 135 7M24 81L66.700 143.700 107 198"/></g>
        <path d="M118 16l4 7 11-12z M90 185l6-6 9 17z" fill="#1010ee"/>
        <circle cx="7" cy="90" r="3.500" fill="#1010ee"/>
        <path d="M21 88H33M27 82v12" stroke="#1010ee" stroke-width="2"/>
        <text x="0" y="96" class="wt">Z</text>
        <text x="134" y="10" class="wt sm">X</text>
        <text x="105" y="206" class="wt sm">Y</text>
      </svg>
      <svg class="triad" viewBox="0 0 100 80">
        <path d="M28 30L49 15l19 25-19 15z" fill="#d0d0d0" stroke="#b8b8b8" stroke-width="2"/>
        <path d="M28 30L62 8" stroke="#d83030" stroke-width="3"/><path d="M56 8l12-6-7 10z" fill="#d83030"/>
        <path d="M28 30L50 58" stroke="#2a9a40" stroke-width="3"/><path d="M44 55l11 9-5-12z" fill="#2a9a40"/>
        <circle cx="28" cy="30" r="4.500" fill="#eee" stroke="#888"/>
        <text x="15" y="36" class="ta z">Z</text><text x="64" y="6" class="ta x">X</text><text x="54" y="72" class="ta y">Y</text>
      </svg>
      <div class="ball"><span>43</span></div>
    </div>
  </div>
</main>

<footer class="status">
  <div class="st-msg">该操作重置恢复数据</div>
  <div class="st-r"><i></i><svg viewBox="0 0 24 16"><path d="M2 15L12 2l10 13z" fill="#7a7a7a"/></svg><svg class="st-f" viewBox="0 0 14 14"><path d="M1 3V1h2M11 1h2v2M13 11v2h-2M3 13H1v-2" fill="none" stroke="#fff"/><path d="M3 3h8v8H3z" fill="#2a70c8" stroke="#fff"/></svg><i class="l2"></i></div>
</footer>

<div class="taskbar">
  <span class="t"><svg viewBox="0 0 24 24"><path d="M1 4l9-1.500V11H1zM11 2.300L23 1v10H11zM1 12h9v8.500L1 19zM11 12h12v11l-12-1.600z" fill="#fff"/></svg></span>
  <span class="t"><svg viewBox="0 0 24 24"><path d="M6 3h12v18H6z" fill="none" stroke="#fff" stroke-width="1.400"/><path d="M3 6H1v12h2M21 6h2v12h-2" fill="none" stroke="#fff"/></svg></span>
  <span class="t on"><svg viewBox="0 0 32 32"><circle cx="15" cy="14" r="11" fill="none" stroke="#1a90f0" stroke-width="6"/><path d="M13 27c0-4 4-6 7-5 3-3 9 0 8 5z" fill="#fff"/></svg></span>
  <span class="t"><svg viewBox="0 0 32 32"><rect x="2" y="1" width="28" height="30" rx="4" fill="#1a8cf0"/><path d="M5 14c8-1 14-4 22-8-3 4-6 6-10 8l6 0c-3 2-6 3-9 3l3 6c-4-1-6-3-7-6z" fill="#fff"/></svg></span>
  <span class="t"><svg viewBox="0 0 32 32"><circle cx="9" cy="24" r="5" fill="#c4d4f0"/><path d="M5 13c9-3 18 4 18 14M5 6c14-3 24 7 24 21" fill="none" stroke="#a8c0e8" stroke-width="4"/></svg></span>
  <span class="t"><svg viewBox="0 0 32 32"><rect x="2" y="1" width="28" height="30" rx="6" fill="#e02018"/><circle cx="16" cy="17" r="8" fill="none" stroke="#fff" stroke-width="2.500"/><circle cx="16" cy="17" r="3" fill="none" stroke="#fff" stroke-width="2"/><path d="M18 4l-3 5" stroke="#fff" stroke-width="2.500"/></svg></span>
  <span class="t"><svg viewBox="0 0 32 32"><path d="M3 6l15-4v28L3 26z" fill="#2a5aa0"/><path d="M18 6h11v20H18z" fill="#fff" stroke="#2a5aa0"/><path d="M20 10h7M20 14h7M20 18h7M20 22h7" stroke="#2a5aa0"/><text x="10" y="21" class="ot">W</text></svg></span>
  <span class="t"><svg viewBox="0 0 32 32"><path d="M3 6l15-4v28L3 26z" fill="#1a7040"/><path d="M18 6h11v20H18z" fill="#fff" stroke="#1a7040"/><path d="M20 10h7M20 14h7M20 18h7M20 22h7M23 6v20" stroke="#1a7040"/><text x="10" y="21" class="ot">X</text></svg></span>
  <span class="t"><svg viewBox="0 0 32 32"><path d="M3 6l15-4v28L3 26z" fill="#80307f"/><path d="M18 6h11v20H18z" fill="#fff" stroke="#80307f"/><path d="M20 10h7M20 14h7M20 18h7M20 22h7" stroke="#80307f"/><text x="10" y="21" class="ot">N</text></svg></span>
  <span class="t"><svg viewBox="0 0 32 32"><path d="M3 6l15-4v28L3 26z" fill="#d04020"/><path d="M18 6h11v20H18z" fill="#fff" stroke="#d04020"/><path d="M20 10a5 5 0 1 0 5 5h-5z" fill="#d04020"/><text x="10" y="21" class="ot">P</text></svg></span>
  <span class="t"><svg viewBox="0 0 32 32"><path d="M5 2h15v27l-15 2z" fill="#f0d080"/><path d="M20 22c1-4 6-5 7-2 3 0 3 7 0 7h-8z" fill="#1a80e0"/></svg></span>
  <span class="t"><svg viewBox="0 0 32 32"><rect x="2" y="1" width="28" height="30" rx="3" fill="#fff"/><path d="M6 8l11 5 8-8-3 10 3 0-8 4-1 9-3-10z" fill="#1a80e0"/></svg></span>
  <span class="t"><svg viewBox="0 0 32 32"><rect x="3" y="1" width="26" height="30" rx="6" fill="#fff"/><circle cx="16" cy="10" r="4.500" fill="none" stroke="#2a60e0" stroke-width="2.500"/><circle cx="10" cy="19" r="4.500" fill="none" stroke="#2a60e0" stroke-width="2.500"/><circle cx="22" cy="19" r="4.500" fill="none" stroke="#2a60e0" stroke-width="2.500"/><path d="M11 29h4" stroke="#2a60e0" stroke-width="2"/><path d="M17 29h4" stroke="#e02020" stroke-width="2"/></svg></span>
  <span class="t"><svg viewBox="0 0 32 32"><ellipse cx="14" cy="18" rx="9" ry="13" fill="#1a8ad0"/><path d="M6 3h14l-6 14z" fill="#d8203a"/><path d="M28 6c2 9-6 21-17 25 8-5 14-13 14-25z" fill="#f0a010"/><path d="M8 18c2 4 6 4 9 1l-5 10c-3-2-4-5-4-11z" fill="#20b060"/></svg></span>
  <span class="t"><svg viewBox="0 0 32 32"><ellipse cx="16" cy="10" rx="7" ry="9" fill="#111" stroke="#333"/><ellipse cx="16" cy="20" rx="7" ry="9" fill="#fff"/><path d="M11 7h3v4h-3zM18 7h3v4h-3z" fill="#fff"/><path d="M12 13h8l-4 2z" fill="#f0a010"/><path d="M9 16h14v3H9z" fill="#e01818"/><path d="M9 29h6M17 29h6" stroke="#f0a010" stroke-width="2"/></svg></span>
  <span class="t"><svg viewBox="0 0 32 32"><ellipse cx="16" cy="16" rx="13" ry="15" fill="#1a4468"/><circle cx="20" cy="13" r="5" fill="none" stroke="#e0e8f0" stroke-width="2"/><circle cx="11" cy="21" r="3" fill="none" stroke="#e0e8f0" stroke-width="2"/><path d="M3 17l8 4 5-4" fill="none" stroke="#e0e8f0" stroke-width="2"/></svg></span>
  <span class="t act"><svg viewBox="0 0 32 32"><ellipse cx="14" cy="18" rx="9" ry="13" fill="#1a8ad0"/><path d="M6 3h14l-6 14z" fill="#d8203a"/><path d="M28 6c2 9-6 21-17 25 8-5 14-13 14-25z" fill="#f0a010"/><path d="M8 18c2 4 6 4 9 1l-5 10c-3-2-4-5-4-11z" fill="#20b060"/></svg></span>
  <div class="tray">
    <svg class="ty s" viewBox="0 0 22 22"><path d="M3 4l16-3 2 15-16 4z" fill="#f05018"/><path d="M15 7c-4-2-7 0-6 2s6 1 6 4-5 3-8 1" fill="none" stroke="#fff" stroke-width="2"/></svg>
    <svg class="ty qq" viewBox="0 0 22 22"><ellipse cx="9" cy="7" rx="5" ry="6" fill="#222"/><path d="M4 11h10v8H4z" fill="#e03018"/><path d="M11 9h10v8H11z" fill="#e8a020"/><path d="M5 20h4M10 20h4" stroke="#f0a010" stroke-width="2"/></svg>
    <svg class="ty" viewBox="0 0 22 22"><path d="M3 17a4 4 0 0 1 1-8 6 6 0 0 1 11-1 4.500 4.500 0 0 1 3 9z" fill="#fff"/></svg>
    <svg class="ty" viewBox="0 0 22 22"><path d="M17 5a8.500 8.500 0 1 0 1 12" fill="none" stroke="#10a0e0" stroke-width="3.500"/><path d="M12 13h8v7" fill="none" stroke="#10a0e0" stroke-width="3.500"/></svg>
    <svg class="ty" viewBox="0 0 22 22"><circle cx="11" cy="11" r="10" fill="#e8d820"/><circle cx="11" cy="11" r="7" fill="#7ab820"/><path d="M11 5v12M5 11h12" stroke="#111" stroke-width="2.500"/></svg>
    <svg class="ty" viewBox="0 0 22 22"><path d="M3 8h16v10H3z" fill="none" stroke="#fff" stroke-width="1.200"/><path d="M3 8h10l-6 10H3z" fill="#fff"/><path d="M2 2v4M5 2v4M1 6h5v3H1z" stroke="#fff"/><path d="M19 10h2v5h-2z" fill="#fff"/></svg>
    <svg class="ty" viewBox="0 0 22 22"><path d="M4 3h16v11H4z" fill="none" stroke="#35b0e8" stroke-width="1.300"/><path d="M1 1h4v6H1zM3 7v10h6M9 17h9" fill="none" stroke="#35b0e8" stroke-width="1.300"/></svg>
    <svg class="ty" viewBox="0 0 22 22"><path d="M2 8h4l4-4v14l-4-4H2z" fill="none" stroke="#fff"/><path d="M13 8a4 4 0 0 1 0 6M16 6a7 7 0 0 1 0 10M19 3a10 10 0 0 1 0 16" fill="none" stroke="#fff"/></svg>
    <div class="clock"><span>1:28</span><span>2018/6/24/周日</span></div>
    <svg class="ty note" viewBox="0 0 22 22"><path d="M1 3h20v14h-8l-2 3-2-3H1z" fill="none" stroke="#fff" stroke-width="1.300"/></svg>
  </div>
</div>

<div class="mark">
  <svg viewBox="0 0 72 82"><path d="M36 0l35 20v42L36 82 0 62V20z" fill="#5fbcf0" opacity=".52"/><path d="M36 14c12 1 22 9 27 22-2 16-12 28-27 32-13-3-23-13-27-28C11 27 22 16 36 14z" fill="#2f90cf" opacity=".3"/><path d="M36 20l25 13v26L36 72 11 59V33z" fill="none" stroke="#dff0fa" stroke-width="3" opacity=".5"/><path d="M36 28l17 9v19L36 65 19 56V37z" fill="#3f9ed8" opacity=".85"/><path d="M19 37l17 9 17-9M36 46v19" fill="none" stroke="#0a4f78" stroke-width="1.500"/></svg>
  <div class="mark-t"><b>3D世界网</b><span>WWW.3DSJW.COM</span></div>
</div>
<script src="script.js"></script>
</body>
</html>
```

FILE: styles.css
```css
*{box-sizing:border-box}
html,body{margin:0;padding:0;width:1920px;height:1080px;overflow:hidden}
body{font:14px "Noto Sans CJK SC","Liberation Sans",sans-serif;color:#111;position:relative;display:flex;flex-direction:column;background:#ddd}
.defs{position:absolute;width:0;height:0}
i{font-style:normal;display:block}

/* title area */
.top{height:56px;flex:none;background:radial-gradient(ellipse 230px 24px at 1860px 56px,#8a8a8a 0,#4a4a4a 45%,rgba(26,26,26,0) 100%),#1a1a1a;border-top:3px solid #555}
.qat{height:25px;display:flex;align-items:center}
.qat-l{width:920px;display:flex;align-items:center;flex:none}
.q{width:18px;height:18px;flex:none;margin:0 3px}
.q.nx{width:26px;height:26px;margin:0 2px 0 0}
.qa{width:9px;height:5px;flex:none;margin:0 3px;fill:#bbb}
.qsep{width:1px;height:20px;background:#5a5a5a;margin:0 1px;flex:none}
.qlabel{color:#b0b0b0;font-size:14px;line-height:20px;margin-left:2px;white-space:nowrap;letter-spacing:.5px}
.q.sw{margin-left:6px}
.q.qw{margin-left:6px}
.title{width:819px;flex:none;color:#f4f4f4;font:15.600px "Open Sans","Liberation Sans","Noto Sans CJK SC",sans-serif;white-space:nowrap;padding-bottom:3px}
.siemens{width:95px;flex:none;color:#fff;font:bold 15px "Liberation Sans",sans-serif;letter-spacing:.3px}
.win{display:flex;gap:4px}
.wb{width:25px;height:21px;padding:0 6px;border:1px solid #333;border-radius:3px;background:linear-gradient(#6a6a6a,#3a3a3a);display:flex;align-items:center;justify-content:center}
.wb svg{width:12px;height:12px}
.wb.close{background:linear-gradient(#f07050,#d83818)}
.tabs{height:28px;display:flex;align-items:flex-end;color:#fff}
.tab{width:56px;height:27px;line-height:25px;text-align:center;flex:none}
.tab.wide{width:86px}
.tab.file{width:94px;background:linear-gradient(#2f78bb,#0f4c88);border-radius:4px 4px 0 0;margin-right:3px;letter-spacing:.8px}
.tab.on{width:55px;background:linear-gradient(#fbfbfb,#e4e4e4);color:#111;border-radius:3px 3px 0 0}
.search{margin-left:auto;margin-bottom:3px;width:138px;height:21px;border:1px solid #6a6a6a;background:#333;color:#808080;display:flex;align-items:center;justify-content:space-between;padding:0 4px 0 2px;line-height:19px}
.search svg{width:14px;height:14px}
.helpers{display:flex;width:87px;height:24px;align-items:center;justify-content:space-around;padding:0 5px;margin-bottom:2px}
.helpers svg{width:16px;height:16px}
.qm{fill:#fff;font:bold 12px "Liberation Sans",sans-serif;text-anchor:middle}

/* ribbon */
.ribbon{height:92px;flex:none;display:flex;background:linear-gradient(#e6e6e6,#c6c6c6);border-bottom:1px solid #9a9a9a;font-size:15px}
.grp{flex:none;display:flex;flex-direction:column;border-right:1px solid #efefef;height:91px}
.grp.last{border-right:0}
.w182{width:182px}.w426{width:426px}.w199{width:199px}.w104{width:104px}.w52{width:52px}.w58{width:58px}.w98{width:98px}.w29{width:29px}.w288{width:288px}.w43{width:43px}.w213{width:213px}.w176{width:176px}
.body{height:72px;display:flex;align-items:flex-start;flex:none}
.big{display:flex;flex-direction:column;align-items:center;padding-top:4px;flex:none}
.big .bi{width:36px;height:36px;flex:none}
.big.w28{width:28px}.big.w58{width:58px}.big.w44{width:44px}.big.w38{width:38px}.big.w42{width:42px}.big.w60{width:60px}.big.w36{width:36px}
.ml15{margin-left:15px}.ml14{margin-left:14px}.ml13{margin-left:13px}.ml12{margin-left:12px}.ml11{margin-left:11px}.ml10{margin-left:10px}.ml9{margin-left:9px}.ml7{margin-left:7px}.ml6{margin-left:6px}
.lb{height:20px;line-height:20px;white-space:nowrap;margin-top:-3px;flex:none}
.ba{width:0;height:0;border:4.500px solid transparent;border-top:5px solid #111;border-bottom:0;margin-top:4px;flex:none}
.more{width:38px;height:36px;border:1px solid #bdbdbd;border-radius:4px;background:linear-gradient(#e8e8e8,#d4d4d4);display:flex;align-items:center;justify-content:center;flex:none}
.more svg{width:22px;height:22px}
.list{display:flex;flex-direction:column;flex:none;width:max-content;margin-top:-1px}
.lw80{width:80px}.lw65{width:65px}.lw79{width:79px}
.li{height:22.500px;display:flex;align-items:center;white-space:nowrap;line-height:22px}
.li svg{width:18px;height:18px;margin-right:3px;flex:none}
.mini{width:0;height:0;border:3.500px solid transparent;border-top:4px solid #333;border-bottom:0;margin-left:9px}
.gallery{margin:5px 0 0 14px;width:119px;height:66px;border:1px solid #c6c6c6;border-radius:3px;display:flex;background:#e4e4e4}
.gal-g{width:99px;display:grid;grid-template-columns:repeat(3,33px);grid-auto-rows:32px}
.gal-g svg{width:33px;height:32px}
.gal-s{width:19px;display:flex;flex-direction:column}
.gal-s span{flex:1;border-left:1px solid #b8b8b8;border-bottom:1px solid #b8b8b8;background:#e8e8e8;position:relative;display:flex;align-items:center;justify-content:center}
.gal-s span:after{content:"";border:4px solid transparent;border-top:5px solid #222;border-bottom:0}
.gal-s .up:after{border-top:0;border-bottom:5px solid #bbb}
.gal-s .dn2:after{box-shadow:0 -3px 0 0 #222}
.foot{height:19px;display:flex;align-items:center;padding:0 7px 2px 0;color:#555;font-size:14px;line-height:17px;flex:none}
.fl{flex:1;min-width:0;text-align:center;white-space:nowrap;letter-spacing:1px}
.fa{width:0;height:0;border:5px solid transparent;border-top:5px solid #333;border-bottom:0;margin:0 2px;flex:none}
.pl6{padding-left:6px}.pl4{padding-left:4px}
.lng{letter-spacing:.7px}
.fa.fr{margin-right:2px}
.rows{height:72px;padding:6px 0 0 4px;flex:none}
.rows.pl3{padding-left:3px}
.row{height:30px;display:flex;align-items:center}
.sl{width:23px;height:30px;display:flex;flex-direction:column;align-items:center;justify-content:center;flex:none}
.sl svg{width:22px;height:22px}
.vsep{width:1px;height:24px;background:#f4f4f4;box-shadow:1px 0 0 #b8b8b8;margin:0 3px;flex:none}
.vsep.nm{margin:0 2px 0 3px}
.dbl svg{width:19px;height:10px}
.dbl b{font:bold 9px/9px "Liberation Sans",sans-serif;color:#222}
.dbl em{font-style:normal;color:#a01818}
.dt b{font:bold 8.500px/8px "Liberation Mono",monospace;letter-spacing:-.2px;white-space:nowrap;display:block}
.dt .red{color:#a81818}.dt .gry{color:#999}
.dt .x{font:15px/16px "Liberation Sans",sans-serif}
.dt .xbox{font:15px/17px "Liberation Sans",sans-serif;width:18px;height:19px;border:1.500px solid #8a1010;text-align:center}
.dt .xpar{font:15px/18px "Liberation Sans",sans-serif}
.dt .xpar em{font-style:normal;color:#a01010}
.blu b{color:#1818c8;font:bold 9px/9px "Liberation Sans",sans-serif}
.blu .lim{font-size:9px;letter-spacing:-.3px}
.blu sup{font-size:6px;line-height:0;vertical-align:2px}
.tiny{font:bold 6px "Liberation Sans",sans-serif;fill:#a01010}
.off .lb{color:#aaa}
.hd{height:36px;display:flex;justify-content:center}
.hd svg{width:28px;height:34px}
.bi.wd{width:36px}

/* selection bar */
.selbar{height:29px;flex:none;display:flex;align-items:center;background:linear-gradient(#dedede,#c8c8c8);border-bottom:1px solid #adadad;padding-left:8px}
.mn{width:20px;height:18px;margin-right:3px;flex:none}
.menu{width:57px;white-space:nowrap;flex:none}
.sa{width:0;height:0;border:4px solid transparent;border-top:5px solid #222;border-bottom:0;flex:none;margin:0 4px}
.sa.ws{margin:0 3px}
.ssep{width:1px;height:22px;background:#f2f2f2;box-shadow:1px 0 0 #b0b0b0;margin:0 10px 0 0;flex:none}
.combo{height:20px;border:1px solid #909090;border-radius:3px;background:#fff;display:flex;justify-content:space-between;align-items:stretch;line-height:18px;flex:none;overflow:hidden;padding-left:1px}
.combo span{white-space:nowrap}
.combo i{width:21px;background:linear-gradient(#dcebf8,#6aa8e4);display:flex;align-items:center;justify-content:center}
.combo i:after{content:"";border:6px solid transparent;border-top:7px solid #112;border-bottom:0}
.c1{width:147px;margin-right:11px}
.c2{width:155px}
.tools{display:flex;align-items:center;flex:none}
.b{display:flex;justify-content:center;flex:none}
.b svg,.bx svg{width:20px;height:20px;flex:none}
.dim{opacity:.7}
.b.w20{width:20px}.b.w22{width:22px}.b.w23{width:23px}.b.w24{width:24px}.b.w25{width:25px}.b.w26{width:26px}.b.w28{width:28px}.b.w30{width:30px}.b.w32{width:32px}
.bx{width:22px;height:22px;margin:0 2px;background:#fff;border:1px solid #777;border-radius:3px;display:flex;align-items:center;justify-content:center;flex:none}
.ssep.mg{margin:0 8px 0 7px}
.ssep.mg2{margin:0 0 0 9px}
.endarrow{margin-left:auto;margin-right:7px}

/* main */
.main{height:830px;flex:none;display:flex}
.rbar{width:31px;flex:none;background:linear-gradient(90deg,#b2b2b2 0,#aaa 70%,#8c8c8c 100%)}
.gear{height:45px;background:linear-gradient(#d0d0d0 0 30px,transparent 30px);display:flex;justify-content:center;padding-top:7px}
.gear svg{width:14px;height:14px}
.rt{height:39px;margin:0 0 3px 5px;width:26px;background:#d8d8d8;border:1px solid #808080;border-right:0;border-radius:4px 0 0 4px;display:flex;align-items:center;padding-left:1px}
.rt svg{width:24px;height:28px}
.rt.act{background:#eee;margin:-1px 0 0 2px;width:29px;height:44px;padding-left:3px}
.rt.g14{margin-top:14px}
.rt.g15{margin-top:15px}
.rt.g16{margin-top:16px}
.nav{width:53px;flex:none;background:#ececec;border-right:2px solid #8a8a8a;border-left:1px solid #fff;display:flex;flex-direction:column;padding-bottom:5px}
.nav-top{height:37px;display:flex;justify-content:center;padding-top:12px;background:#f4f4f4}
.nav-top svg{width:15px;height:15px;margin-left:6px}
.tree{margin-left:6px;width:36px;height:675px;border:2px solid #777;border-right-width:1px;background:#fff;display:flex;flex-direction:column;overflow:hidden;flex:none}
.tree-h{height:18px;line-height:18px;background:linear-gradient(#f4f4f4,#dcdcdc);white-space:nowrap;padding-left:7px;flex:none;overflow:hidden;margin-left:1px}
.tree-r{height:20px;border-bottom:1px solid #e0e0e0;display:flex;align-items:center;padding-left:4px;flex:none;overflow:hidden;position:relative}
.tree-r:nth-child(even){background:#f6f6f6}
.tree-r svg{width:18px;height:18px;margin-left:5px;flex:none}
.pm{width:9px;height:9px;border:1px solid #888;border-radius:2px;font:10px/7px "Liberation Sans",sans-serif;text-align:center;background:#fff;flex:none}
.tree-fill{flex:1;background:repeating-linear-gradient(#f6f6f6 0 19px,#e4e4e4 19px 20px,#fff 20px 39px,#e4e4e4 39px 40px);position:relative}
.tree-fill:after{content:"";position:absolute;right:3px;top:0;height:150px;border-right:1px dotted #888}
.tree-nav,.acc-nav{height:21px;display:flex;align-items:center;justify-content:space-around;background:#eee;flex:none}
.cl,.cr{width:6px;height:6px;border-left:2px solid #666;border-bottom:2px solid #666;transform:rotate(45deg)}
.cr{transform:rotate(225deg)}
.split{height:13px;position:relative;flex:none}
.split:after{content:"";position:absolute;left:6px;right:9px;top:6px;height:1px;background:#bbb}
.acc{height:26px;margin:0 8px 0 6px;background:linear-gradient(#f8f8f8 0 60%,#d4d4d4 100%);border-bottom:1px solid #999;font-weight:700;font-size:14px;line-height:24px;padding-left:8px;flex:none;white-space:nowrap}
.acc-nav{margin:0 8px 0 6px}
.work{flex:1;display:flex;flex-direction:column;min-width:0}
.doc{height:20px;flex:none;background:#ececec;border-bottom:2px solid #555;display:flex}
.doctab{width:125px;height:18px;background:#555;color:#fff;display:flex;align-items:center;padding-left:6px;font:14px "Liberation Mono","Noto Sans CJK SC",monospace}
.doctab svg{width:15px;height:15px;flex:none;margin-right:6px}
.doctab span{flex:1;white-space:nowrap;overflow:hidden}
.doctab b{font:bold 15px "Liberation Sans",sans-serif;width:21px;text-align:center}
.view{flex:1;position:relative;background:linear-gradient(#b3b4b6 0,#e7e8ea 90%);border-bottom:1px solid #999;overflow:hidden}
.model{position:absolute;left:556px;top:242px;width:600px;height:520px}
.wcs{position:absolute;left:1191px;top:-1px;width:160px;height:220px;overflow:visible}
.wt{font:bold 13px "Liberation Sans",sans-serif;fill:#1010ee}
.wt.sm{font:11px "Liberation Sans",sans-serif}
.triad{position:absolute;left:37px;top:712px;width:100px;height:80px;overflow:visible}
.ta{font:11px "Liberation Sans",sans-serif}
.ta.z{fill:#1040e0;font-weight:700;font-size:13px}
.ta.x{fill:#d03030}
.ta.y{fill:#2a9a40}
.ball{position:absolute;left:1817px;top:291px;width:42px;height:42px;border-radius:50%;background:radial-gradient(circle at 50% 35%,#6fe08f,#32b85a);border:3px solid #ececec;box-shadow:0 0 0 1px #999;color:#fff;font:bold 13px/36px "DejaVu Sans Mono",monospace;padding-left:3px;white-space:nowrap}

.status{height:22px;flex:none;background:linear-gradient(#e6e6e6,#d4d4d4);display:flex;position:relative;font-weight:500;border-bottom:1px solid #888}
.st-msg{margin-left:903px;padding-left:4px;line-height:20px;border-left:1px solid #f4f4f4;white-space:nowrap;color:#111;font-weight:700;font-size:14px;letter-spacing:.4px}
.st-r{margin-left:auto;width:115px;display:flex;align-items:center;justify-content:flex-start}
.st-r i{width:1px;height:18px;background:#eee;margin-right:20px}
.st-r svg{width:24px;height:16px;opacity:.8;flex:none}
.st-r .st-f{width:14px;height:14px;margin-right:37px;opacity:1}
.st-r i.l2{margin:0}

.taskbar{height:50px;flex:none;background:#0c0e07;display:flex;align-items:center}
.t{width:62px;height:50px;display:flex;align-items:center;justify-content:center;flex:none;position:relative}
.t svg{width:32px;height:32px}
.t:first-child{width:59px}
.t:first-child svg,.t:nth-child(2) svg{width:24px;height:24px}
.t.on{margin-left:2px}
.t.on:after,.t.act:after{content:"";position:absolute;left:5px;right:5px;bottom:0;height:3px;background:#76b9ed}
.t.act{background:#45463f}
.t.act:after{left:0;right:0}
.ot{fill:#fff;font:bold 13px "Liberation Sans",sans-serif;text-anchor:middle}
.tray{margin:0 5px 0 auto;display:flex;align-items:center;height:50px;width:438px;flex:none;border-right:1px solid #333}
.ty{width:22px;height:22px;margin:0 4px;flex:none}
.ty.s{margin-right:10px;margin-left:6px}
.clock{width:118px;margin-left:6px;color:#f0f0f0;display:flex;flex-direction:column;align-items:center;font:16.500px/23px "Noto Sans","Noto Sans CJK SC",sans-serif;white-space:nowrap}
.ty.note{margin-left:19px}

.mark{position:absolute;left:1637px;top:985px;display:flex;pointer-events:none}
.mark svg{width:72px;height:82px;flex:none}
.mark-t{margin-left:9px;display:flex;flex-direction:column}
.mark-t b{font:bold 42px/50px "Liberation Sans","Noto Sans CJK SC",sans-serif;color:rgba(255,255,255,.48);white-space:nowrap;margin-top:6px;letter-spacing:.5px}
.mark-t span{font:bold 17px/20px "Liberation Sans",sans-serif;color:rgba(215,215,215,.55);letter-spacing:1.600px;margin-top:-3px;white-space:nowrap}
```

FILE: script.js
```js
// Shaded soap-box model on the viewport canvas (page coords minus 640,440).
(function () {
  var cv = document.getElementById('model');
  var ctx = cv.getContext('2d');
  var W = cv.width, H = cv.height;
  var RA = [435.3, 156.2], RB = [165.5, 355.7], RO = 141.6;
  var FA = [441.6, 156.5], FB = [171.3, 355.5], RI = 99.8;
  var LA = 0.874, LZ = 0.486;
  var ramp = [[-0.72, 80, 48, 0], [-0.4, 106, 66, 0], [-0.2, 148, 92, 0], [0, 192, 120, 0], [0.2, 232, 144, 0], [0.486, 255, 160, 0], [0.64, 255, 205, 22], [0.86, 255, 214, 30], [1.02, 255, 244, 51]];

  function color(b) {
    if (b <= ramp[0][0]) return ramp[0];
    for (var i = 1; i < ramp.length; i++) {
      if (b <= ramp[i][0]) {
        var p = ramp[i - 1], q = ramp[i], k = (b - p[0]) / (q[0] - p[0]);
        return [0, p[1] + (q[1] - p[1]) * k, p[2] + (q[2] - p[2]) * k, p[3] + (q[3] - p[3]) * k];
      }
    }
    return ramp[ramp.length - 1];
  }
  function seg(x, y, a, b) {
    var dx = b[0] - a[0], dy = b[1] - a[1];
    var s = ((x - a[0]) * dx + (y - a[1]) * dy) / (dx * dx + dy * dy);
    s = Math.max(0, Math.min(1, s));
    var cx = a[0] + dx * s, cy = a[1] + dy * s;
    var ex = x - cx, ey = y - cy, d = Math.sqrt(ex * ex + ey * ey) || 1;
    return [d, ex / d, ey / d];
  }
  // back shell
  ctx.lineCap = 'round';
  ctx.lineWidth = RO * 2;
  var sg = ctx.createLinearGradient(0, 0, 0, 500);
  sg.addColorStop(0, '#6e6e6e'); sg.addColorStop(1, '#363636');
  ctx.strokeStyle = sg;
  ctx.beginPath(); ctx.moveTo(RA[0] - 10.5, RA[1] + 2.5); ctx.lineTo(RB[0] - 10.5, RB[1] + 2.5); ctx.stroke();

  // rounded rim, per-pixel
  var off = document.createElement('canvas'); off.width = W; off.height = H;
  var oc = off.getContext('2d'), img = oc.createImageData(W, H), data = img.data;
  for (var y = 0; y < H; y++) {
    for (var x = 0; x < W; x++) {
      var o = seg(x + 0.5, y + 0.5, RA, RB);
      if (o[0] > RO + 1) continue;
      var t = 0.5, r = o;
      for (var n = 0; n < 4; n++) {
        var a = [FA[0] + (RA[0] - FA[0]) * t, FA[1] + (RA[1] - FA[1]) * t];
        var c = [FB[0] + (RB[0] - FB[0]) * t, FB[1] + (RB[1] - FB[1]) * t];
        r = seg(x + 0.5, y + 0.5, a, c);
        t = Math.max(0, Math.min(1, (r[0] - RI) / (RO - RI)));
      }
      var th = t * Math.PI / 2;
      var lobe = Math.max(0, r[1] * 0.6 - r[2] * 0.8);
      var v = r[1] * 0.2 - r[2] * 0.72 + 0.35 * Math.pow(lobe, 6);
      var b = Math.cos(th) * LZ + Math.sin(th) * v * LA;
      var col = color(b), i4 = (y * W + x) * 4;
      data[i4] = col[1]; data[i4 + 1] = col[2]; data[i4 + 2] = col[3];
      data[i4 + 3] = 255 * Math.max(0, Math.min(1, RO + 0.5 - o[0]));
    }
  }
  oc.putImageData(img, 0, 0);
  ctx.drawImage(off, 0, 0);

  // seams
  ctx.lineCap = 'butt'; ctx.lineWidth = 0.8; ctx.strokeStyle = '#4a3000';
  [[352, 41.7, 369, 55, 382.7, 76], [82.3, 240.7, 99, 255, 113, 275], [229.6, 436, 241, 451, 248.8, 470.7], [500.6, 237, 512, 252, 518.6, 270.7]].forEach(function (s) {
    ctx.beginPath(); ctx.moveTo(s[0], s[1]); ctx.quadraticCurveTo(s[2], s[3], s[4], s[5]); ctx.stroke();
  });

  // flat face
  ctx.lineCap = 'round';
  ctx.strokeStyle = '#2e2e2e'; ctx.lineWidth = RI * 2 + 1;
  ctx.beginPath(); ctx.moveTo(FA[0], FA[1]); ctx.lineTo(FB[0], FB[1]); ctx.stroke();
  ctx.strokeStyle = '#737373'; ctx.lineWidth = RI * 2 - 0.6;
  ctx.beginPath(); ctx.moveTo(FA[0], FA[1]); ctx.lineTo(FB[0], FB[1]); ctx.stroke();

  // holes
  for (var j = 0; j < 5; j++) {
    for (var k = 0; k < 7; k++) {
      var hx = 130.1 + k * 45.1 + j * 20.3, hy = 299 - k * 33.1 + j * 28;
      var f = Math.min(1, (hy + 440 - 198) / 728);
      var shade = 'rgb(' + Math.round(179 + 52 * f) + ',' + Math.round(180 + 52 * f) + ',' + Math.round(182 + 52 * f) + ')';
      ctx.beginPath(); ctx.ellipse(hx, hy, 8.4, 9.2, 0.35, 0, 7); ctx.fillStyle = '#b87200'; ctx.fill();
      ctx.lineWidth = 0.8; ctx.strokeStyle = '#333'; ctx.stroke();
      ctx.beginPath(); ctx.ellipse(hx - 1.5, hy - 0.2, 6.9, 8.6, 0.35, 0, 7); ctx.fillStyle = shade; ctx.fill();
    }
  }
})();
```
